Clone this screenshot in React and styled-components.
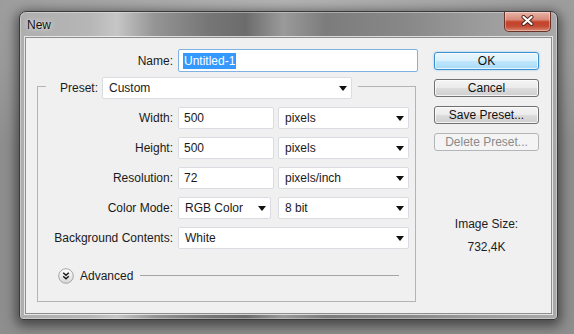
import React from "react";
import styled, { createGlobalStyle } from "styled-components";

const Global = createGlobalStyle`
  html, body {
    margin: 0;
    padding: 0;
    width: 574px;
    height: 334px;
    overflow: hidden;
    background: #a5a5a5;
    font-family: "Liberation Sans", Arial, sans-serif;
    font-size: 12px;
    color: #1a1a1a;
  }
`;

const Stage = styled.div`
  width: 574px;
  height: 334px;
  box-sizing: border-box;
  padding: 11px 0 0 19px;
  background: radial-gradient(ellipse 70% 60% at 50% 0%, #b4b4b4 0%, #a2a2a2 60%, #8e8e8e 100%);
`;

const Window = styled.div`
  width: 539px;
  height: 309px;
  box-sizing: border-box;
  display: flex;
  flex-direction: column;
  border: 1px solid #3a3a3a;
  border-radius: 7px 7px 4px 4px;
  background: linear-gradient(
    to right,
    #aeaeae 0%,
    #b6b6b6 13%,
    #c6c6c6 18%,
    #959595 25%,
    #767676 35%,
    #6c6c6c 42%,
    #9a9a9a 49%,
    #7c7c7c 57%,
    #888888 72%,
    #9c9c9c 86%,
    #a9a9a9 100%
  );
  box-shadow: inset 0 0 0 1px rgba(255, 255, 255, 0.35), 0 3px 12px 3px rgba(0, 0, 0, 0.5);
`;

const TitleBar = styled.div`
  height: 25px;
  display: flex;
  justify-content: space-between;
  align-items: flex-start;
  padding: 0 6px 0 7px;
`;

const Title = styled.span`
  align-self: center;
  font-size: 12px;
  color: #111;
  text-shadow: 0 0 6px rgba(255, 255, 255, 0.8), 0 0 2px rgba(255, 255, 255, 0.6);
`;

const CloseButton = styled.div`
  width: 47px;
  height: 20px;
  box-sizing: border-box;
  display: flex;
  align-items: center;
  justify-content: center;
  padding-bottom: 2px;
  border: 1px solid #6e3027;
  border-top: none;
  border-radius: 0 0 5px 5px;
  background: linear-gradient(
    to bottom,
    #e9b3a6 0%,
    #d88b7a 40%,
    #c5432c 52%,
    #c24a33 75%,
    #d98a70 100%
  );
  box-shadow: inset 0 0 0 1px rgba(255, 255, 255, 0.35);
`;

const Client = styled.div`
  flex: 1;
  margin: 0 5px 5px;
  display: flex;
  border: 1px solid #8d8d8d;
  background: #f0f0f0;
  box-shadow: 0 0 0 1px rgba(255, 255, 255, 0.7);
`;

const LeftCol = styled.div`
  display: flex;
  flex-direction: column;
  padding: 11px 0 0 11px;
`;

const RightCol = styled.div`
  width: 105px;
  margin: 0 12px 0 auto;
  padding-top: 14px;
  display: flex;
  flex-direction: column;
  gap: 9px;
`;

const NameRow = styled.div`
  display: grid;
  grid-template-columns: 136px 240px;
  column-gap: 5px;
  align-items: center;
`;

const Label = styled.span`
  text-align: right;
  white-space: nowrap;
`;

const TextBox = styled.div`
  height: ${(p) => (p.$tall ? 23 : 22)}px;
  width: ${(p) => (p.$width ? `${p.$width}px` : "auto")};
  box-sizing: border-box;
  display: flex;
  align-items: center;
  padding: 0 5px;
  background: #fff;
  border: 1px solid ${(p) => (p.$focused ? "#7fb2e2" : "#d9dde2")};
  border-radius: 2px;
  white-space: nowrap;
`;

const Selected = styled.span`
  background: #3399ff;
  color: #fff;
  padding: 1px 1px;
  margin-left: -1px;
`;

const SelectBox = styled.div`
  height: 22px;
  width: ${(p) => p.$width}px;
  box-sizing: border-box;
  display: flex;
  align-items: center;
  justify-content: space-between;
  padding: 0 4px 0 6px;
  background: #fff;
  border: 1px solid #d9dde2;
  border-radius: 2px;
  white-space: nowrap;
`;

const GroupBox = styled.fieldset`
  margin: 1px 0 0;
  width: 379px;
  box-sizing: border-box;
  border: 1px solid #b4b4b4;
  padding: 8px 0 17px 8px;
  min-inline-size: 0;
`;

const Legend = styled.legend`
  display: flex;
  align-items: center;
  gap: 4px;
  padding: 4px 6px 0 14px;
`;

const Rows = styled.div`
  display: grid;
  grid-template-columns: 127px auto;
  column-gap: 5px;
  row-gap: 8px;
  align-items: center;
`;

const FieldPair = styled.div`
  display: grid;
  grid-template-columns: 96px 131px;
  column-gap: 4px;
`;

const AdvancedRow = styled.div`
  display: flex;
  align-items: center;
  gap: 6px;
  margin: 19px 16px 0 12px;
  height: 16px;
`;

const Rule = styled.div`
  flex: 1;
  height: 1px;
  margin-top: -2px;
  margin-left: 1px;
  background: #a4a4a4;
`;

const Button = styled.div`
  height: 18px;
  box-sizing: border-box;
  display: flex;
  align-items: center;
  justify-content: center;
  border-radius: 3px;
  border: 1px solid ${(p) => (p.$default ? "#3c8fcf" : p.$disabled ? "#b3b6b8" : "#707070")};
  color: ${(p) => (p.$disabled ? "#8a8a8a" : "#111")};
  background: ${(p) =>
    p.$default
      ? "linear-gradient(to bottom, #eaf6fd 0%, #d9f0fc 50%, #bee6fd 51%, #a9dbf6 100%)"
      : p.$disabled
      ? "#f4f4f4"
      : "linear-gradient(to bottom, #f4f4f4 0%, #ebebeb 50%, #dddddd 51%, #cfcfcf 100%)"};
  box-shadow: ${(p) =>
    p.$default
      ? "inset 0 0 0 1px rgba(255,255,255,0.7), 0 0 2px rgba(60,160,230,0.6)"
      : p.$disabled
      ? "none"
      : "inset 0 0 0 1px rgba(255,255,255,0.75)"};
`;

const InfoBlock = styled.div`
  margin-top: 57px;
  display: flex;
  flex-direction: column;
  align-items: center;
  gap: 9px;
  line-height: 14px;
  color: #1c1c24;
`;

const Arrow = () => (
  <svg width="8" height="5" viewBox="0 0 8 5">
    <polygon points="0,0 8,0 4,5" fill="#111" />
  </svg>
);

const CloseGlyph = () => (
  <svg width="13" height="11" viewBox="0 0 13 11">
    <path d="M2.5 2 L10.5 9 M10.5 2 L2.5 9" stroke="#4a1f18" strokeWidth="4" strokeLinecap="round" />
    <path d="M2.5 2 L10.5 9 M10.5 2 L2.5 9" stroke="#ffffff" strokeWidth="2.2" strokeLinecap="round" />
  </svg>
);

const ExpandIcon = () => (
  <svg width="16" height="16" viewBox="0 0 16 16">
    <defs>
      <linearGradient id="advg" x1="0" y1="0" x2="0" y2="1">
        <stop offset="0" stopColor="#ffffff" />
        <stop offset="1" stopColor="#d6d6d6" />
      </linearGradient>
    </defs>
    <circle cx="8" cy="8" r="7.3" fill="url(#advg)" stroke="#a5a5a5" strokeWidth="1" />
    <path d="M5.2 4.8 L8 7.3 L10.8 4.8 M5.2 8.3 L8 10.8 L10.8 8.3" fill="none" stroke="#1a1a1a" strokeWidth="1.5" />
  </svg>
);

const Select = ({ width, children }) => (
  <SelectBox $width={width}>
    <span>{children}</span>
    <Arrow />
  </SelectBox>
);

const rows = [
  { label: "Width:", value: "500", unit: "pixels" },
  { label: "Height:", value: "500", unit: "pixels" },
  { label: "Resolution:", value: "72", unit: "pixels/inch" },
];

export default function App() {
  return (
    <>
      <Global />
      <Stage>
        <Window>
          <TitleBar>
            <Title>New</Title>
            <CloseButton>
              <CloseGlyph />
            </CloseButton>
          </TitleBar>
          <Client>
            <LeftCol>
              <NameRow>
                <Label>Name:</Label>
                <TextBox $focused $tall>
                  <Selected>Untitled-1</Selected>
                </TextBox>
              </NameRow>
              <GroupBox>
                <Legend>
                  <Label>Preset:</Label>
                  <Select width={250}>Custom</Select>
                </Legend>
                <Rows>
                  {rows.map((r) => (
                    <React.Fragment key={r.label}>
                      <Label>{r.label}</Label>
                      <FieldPair>
                        <TextBox>{r.value}</TextBox>
                        <Select width={131}>{r.unit}</Select>
                      </FieldPair>
                    </React.Fragment>
                  ))}
                  <Label>Color Mode:</Label>
                  <FieldPair>
                    <Select width={93}>RGB Color</Select>
                    <Select width={131}>8 bit</Select>
                  </FieldPair>
                  <Label>Background Contents:</Label>
                  <Select width={231}>White</Select>
                </Rows>
                <AdvancedRow>
                  <ExpandIcon />
                  <span>Advanced</span>
                  <Rule />
                </AdvancedRow>
              </GroupBox>
            </LeftCol>
            <RightCol>
              <Button $default>OK</Button>
              <Button>Cancel</Button>
              <Button>Save Preset...</Button>
              <Button $disabled>Delete Preset...</Button>
              <InfoBlock>
                <span>Image Size:</span>
                <span>732,4K</span>
              </InfoBlock>
            </RightCol>
          </Client>
        </Window>
      </Stage>
    </>
  );
}
